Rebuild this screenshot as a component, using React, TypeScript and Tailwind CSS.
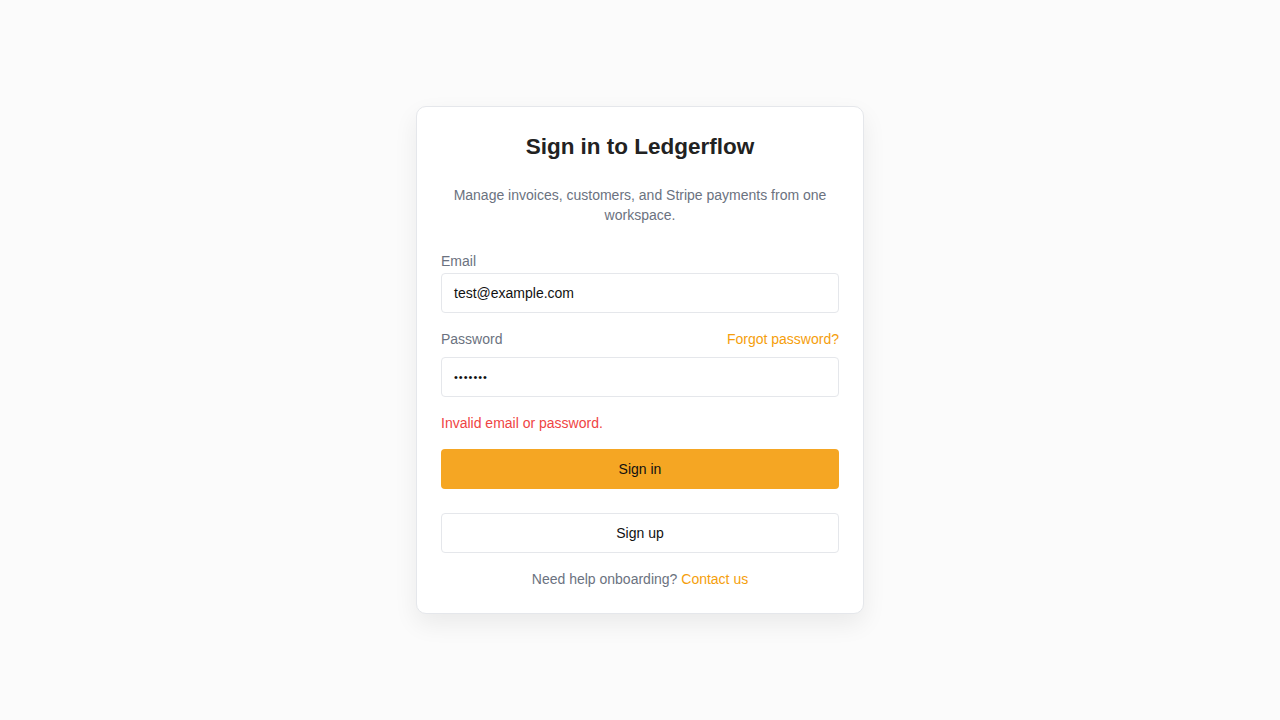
import React from "react";

export default function App() {
  return (
    <div
      className="min-h-[720px] w-full bg-[#fbfbfb] flex justify-center items-start pt-[106px]"
      style={{ fontFamily: '"Liberation Sans", Arial, Helvetica, sans-serif' }}
    >
      <div className="w-[448px] bg-white border border-[#e5e7eb] rounded-[10px] p-6 shadow-[0_10px_25px_rgba(0,0,0,0.07)]">
        <h1 className="text-[22.5px] leading-8 font-bold text-[#222] text-center">Sign in to Ledgerflow</h1>
        <p className="mt-[22px] text-[14px] leading-5 text-[#6b7280] text-center px-2">
          Manage invoices, customers, and Stripe payments from one workspace.
        </p>
        <label className="block mt-[26px] text-[14px] leading-5 text-[#6b7280]">Email</label>
        <div className="mt-[2px] h-10 border border-[#e5e7eb] rounded-[4px] px-3 flex items-center text-[14px] text-[#111]">
          test@example.com
        </div>
        <div className="mt-4 flex justify-between text-[14px] leading-5">
          <span className="text-[#6b7280]">Password</span>
          <span className="text-[#f59e0b]">Forgot password?</span>
        </div>
        <div className="mt-2 h-10 border border-[#e5e7eb] rounded-[4px] px-3 flex items-center text-[11px] text-[#111] tracking-[1px]">
          •••••••
        </div>
        <p className="mt-4 text-[14px] leading-5 text-[#ef4444]">Invalid email or password.</p>
        <button className="mt-4 w-full h-10 bg-[#f5a623] rounded-[4px] text-[14px] text-[#111]">Sign in</button>
        <button className="mt-6 w-full h-10 bg-white border border-[#e5e7eb] rounded-[4px] text-[14px] text-[#111]">Sign up</button>
        <p className="mt-4 text-[14px] leading-5 text-center text-[#6b7280]">
          Need help onboarding? <span className="text-[#f59e0b]">Contact us</span>
        </p>
      </div>
    </div>
  );
}
